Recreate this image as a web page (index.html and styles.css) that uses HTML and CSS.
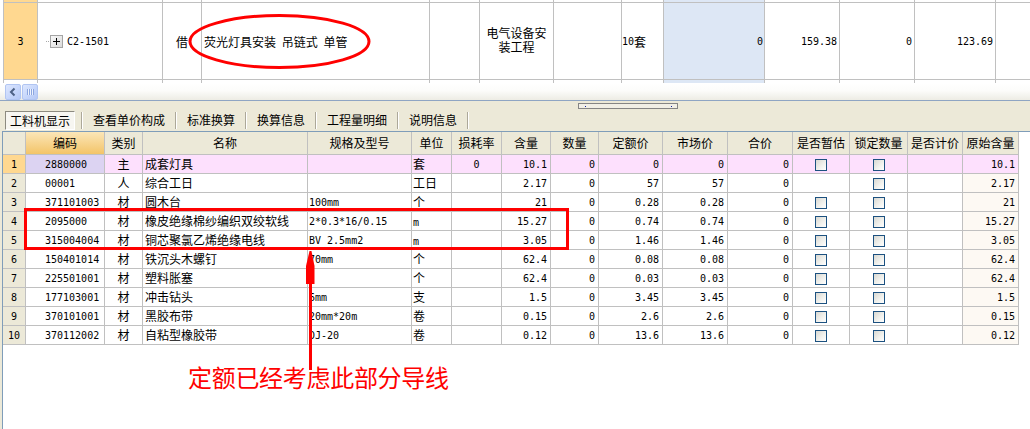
FILE: index.html
```html
<!DOCTYPE html>
<html lang="zh-CN">
<head>
<meta charset="utf-8">
<title>工料机显示</title>
<link rel="stylesheet" href="styles.css">
</head>
<body>
<div class="app">
  <section class="top">
    <div class="topgrid">
      <div class="tg">
        <div class="trn"></div><div></div><div></div><div></div><div></div><div></div><div></div><div></div><div class="sel"></div><div></div><div></div><div></div><div></div>

        <div class="trn mono">3</div>
        <div class="tcode">
          <svg class="exp" width="17" height="13" viewBox="0 0 17 13">
            <defs><linearGradient id="eg" x1="0" y1="0" x2="1" y2="1"><stop offset="0" stop-color="#FAFAFA"/><stop offset="1" stop-color="#D9D9D9"/></linearGradient></defs>
            <path d="M0 6.5H4" stroke="#A8A8A8" stroke-dasharray="1 1"/>
            <rect x="4.5" y="0.5" width="12" height="12" fill="url(#eg)" stroke="#A5A5A5"/>
            <path d="M7 6.5H14M10.5 3V10" stroke="#000"/>
          </svg>
          <span class="mono">C2-1501</span>
        </div>
        <div class="c">借</div>
        <div class="tname">荧光灯具安装 吊链式 单管</div>
        <div></div>
        <div class="dept"><span>电气设备安</span><span>装工程</span></div>
        <div></div>
        <div class="unit"><span class="mono">10</span>套</div>
        <div class="r sel mono">0</div>
        <div class="r mono">159.38</div>
        <div class="r mono">0</div>
        <div class="r mono">123.69</div>
        <div></div>

        <div></div><div></div><div></div><div></div><div></div><div></div><div></div><div></div><div class="sel"></div><div></div><div></div><div></div><div></div>
      </div>
    </div>
    <div class="hscroll">
      <span class="sb">
        <svg width="14" height="14" viewBox="0 0 14 14"><path d="M8.5 3.5L5 7l3.5 3.5" fill="none" stroke="#4D6185" stroke-width="2"/></svg>
      </span>
      <span class="sb">
        <svg width="14" height="14" viewBox="0 0 14 14"><path d="M4.5 4v6M6.5 4v6M8.5 4v6M10.5 4v6" stroke="#8CA6E0"/><path d="M5.5 4v6M7.5 4v6M9.5 4v6" stroke="#EEF3FE"/></svg>
      </span>
    </div>
  </section>

  <div class="splitter"><span class="handle"><i></i><i></i></span></div>

  <nav class="tabs">
    <span class="tab on">工料机显示</span><span class="sep"></span>
    <span class="tab">查看单价构成</span><span class="sep"></span>
    <span class="tab">标准换算</span><span class="sep"></span>
    <span class="tab">换算信息</span><span class="sep"></span>
    <span class="tab">工程量明细</span><span class="sep"></span>
    <span class="tab">说明信息</span><span class="sep"></span>
  </nav>

  <section class="panel">
    <div class="g">
      <div class="hd">
        <div></div><div class="sorted">编码</div><div>类别</div><div>名称</div><div>规格及型号</div><div>单位</div><div>损耗率</div><div>含量</div><div>数量</div><div>定额价</div><div>市场价</div><div>合价</div><div>是否暂估</div><div>锁定数量</div><div>是否计价</div><div>原始含量</div>
      </div>
      <div class="row cur">
        <div>1</div><div>2880000</div><div>主</div><div>成套灯具</div><div></div><div>套</div><div>0</div><div>10.1</div><div>0</div><div>0</div><div>0</div><div>0</div><div><i class="cb"></i></div><div><i class="cb"></i></div><div></div><div>10.1</div>
      </div>
      <div class="row">
        <div>2</div><div>00001</div><div>人</div><div>综合工日</div><div></div><div>工日</div><div></div><div>2.17</div><div>0</div><div>57</div><div>57</div><div>0</div><div></div><div><i class="cb"></i></div><div></div><div>2.17</div>
      </div>
      <div class="row">
        <div>3</div><div>371101003</div><div>材</div><div>圆木台</div><div>100mm</div><div>个</div><div></div><div>21</div><div>0</div><div>0.28</div><div>0.28</div><div>0</div><div><i class="cb"></i></div><div><i class="cb"></i></div><div></div><div>21</div>
      </div>
      <div class="row">
        <div>4</div><div>2095000</div><div>材</div><div>橡皮绝缘棉纱编织双绞软线</div><div>2*0.3*16/0.15</div><div><span class="mono">m</span></div><div></div><div>15.27</div><div>0</div><div>0.74</div><div>0.74</div><div>0</div><div><i class="cb"></i></div><div><i class="cb"></i></div><div></div><div>15.27</div>
      </div>
      <div class="row">
        <div>5</div><div>315004004</div><div>材</div><div>铜芯聚氯乙烯绝缘电线</div><div>BV 2.5mm2</div><div><span class="mono">m</span></div><div></div><div>3.05</div><div>0</div><div>1.46</div><div>1.46</div><div>0</div><div><i class="cb"></i></div><div><i class="cb"></i></div><div></div><div>3.05</div>
      </div>
      <div class="row">
        <div>6</div><div>150401014</div><div>材</div><div>铁沉头木螺钉</div><div>70mm</div><div>个</div><div></div><div>62.4</div><div>0</div><div>0.08</div><div>0.08</div><div>0</div><div><i class="cb"></i></div><div><i class="cb"></i></div><div></div><div>62.4</div>
      </div>
      <div class="row">
        <div>7</div><div>225501001</div><div>材</div><div>塑料胀塞</div><div></div><div>个</div><div></div><div>62.4</div><div>0</div><div>0.03</div><div>0.03</div><div>0</div><div><i class="cb"></i></div><div><i class="cb"></i></div><div></div><div>62.4</div>
      </div>
      <div class="row">
        <div>8</div><div>177103001</div><div>材</div><div>冲击钻头</div><div>6mm</div><div>支</div><div></div><div>1.5</div><div>0</div><div>3.45</div><div>3.45</div><div>0</div><div><i class="cb"></i></div><div><i class="cb"></i></div><div></div><div>1.5</div>
      </div>
      <div class="row">
        <div>9</div><div>370101001</div><div>材</div><div>黑胶布带</div><div>20mm*20m</div><div>卷</div><div></div><div>0.15</div><div>0</div><div>2.6</div><div>2.6</div><div>0</div><div><i class="cb"></i></div><div><i class="cb"></i></div><div></div><div>0.15</div>
      </div>
      <div class="row">
        <div>10</div><div>370112002</div><div>材</div><div>自粘型橡胶带</div><div>DJ-20</div><div>卷</div><div></div><div>0.12</div><div>0</div><div>13.6</div><div>13.6</div><div>0</div><div><i class="cb"></i></div><div><i class="cb"></i></div><div></div><div>0.12</div>
      </div>
    </div>
  </section>

  <svg class="marks" width="1030" height="429" viewBox="0 0 1030 429">
    <ellipse cx="279.5" cy="41.5" rx="89.5" ry="26" fill="none" stroke="#FF0000" stroke-width="3"/>
    <rect x="25.5" y="209.5" width="542" height="39" fill="none" stroke="#FF0000" stroke-width="3"/>
    <path d="M310.5 280V370" stroke="#FF0000" stroke-width="3"/>
    <path d="M309.5 251H311.5L314.5 266V284H306V266Z" fill="#FF0000"/>
  </svg>
  <p class="note">定额已经考虑此部分导线</p>
</div>
</body>
</html>
```

FILE: styles.css
```css
* { box-sizing: border-box; margin: 0; padding: 0; }

html, body { width: 1030px; height: 429px; overflow: hidden; }

body {
  background: #ECE9D8;
  font-family: "Noto Sans CJK SC", "Noto Sans CJK JP", sans-serif;
  font-size: 12px;
  color: #000;
}

.app {
  position: relative;
  width: 1030px;
  height: 429px;
  display: flex;
  flex-direction: column;
}

.mono {
  font-family: "DejaVu Sans Mono", "Liberation Mono", monospace;
  font-size: 10px;
}

/* ---------- top grid ---------- */
.top {
  flex: none;
  background: #fff;
  border-bottom: 1px solid #8FA5C3;
}

.topgrid {
  height: 83px;
  overflow: hidden;
  padding-left: 3px;
}

.tg {
  display: grid;
  width: max-content;
  grid-template-columns: 33px 124px 38px 227px 49px 73px 67px 41px 100px 74px 74px 80px 60px;
  grid-template-rows: 2px 76px 3px;
  gap: 1px;
  padding-left: 1px;
  background: #C0C0C0;
}

.tg > div {
  background: #fff;
  display: flex;
  align-items: center;
  overflow: hidden;
  white-space: nowrap;
}

.tg > .trn { background: #FFD890; justify-content: center; }
.tg > .sel { background: #DDE7F5; }
.tg > .c { justify-content: center; }
.tg > .r { justify-content: flex-end; padding-right: 2px; }
.tg > .sel.r { padding-right: 1px; }

.tcode { padding-left: 8px; gap: 4px; }
.exp { display: block; flex: none; }

.tname { padding-left: 2px; word-spacing: 3px; }

.tg > .dept {
  flex-direction: column;
  justify-content: center;
  align-items: center;
}

.dept span {
  display: block;
  height: 14px;
  line-height: 14px;
  font-family: "Liberation Serif", "Noto Sans CJK SC", sans-serif;
}

.unit { padding-left: 0; }

/* scrollbar */
.hscroll {
  height: 17px;
  display: flex;
  gap: 1px;
  padding: 1px 0 0 5px;
  background: linear-gradient(#FFFFFF 0%, #FCFCFA 45%, #EDECE4 100%);
}

.sb {
  width: 16px;
  height: 16px;
  border: 1px solid #B1C5F2;
  border-radius: 2px;
  background: linear-gradient(135deg, #DDE7FE 0%, #C6D6FB 55%, #B5C8F5 100%);
  display: flex;
  align-items: center;
  justify-content: center;
}

/* splitter */
.splitter {
  flex: none;
  height: 9px;
  padding: 2px 0 0 578px;
}

.handle {
  width: 100px;
  height: 6px;
  border: 1px solid #858585;
  background: #F1EFE6;
  display: flex;
  align-items: center;
  justify-content: space-between;
  padding: 0 5px 0 6px;
}

.handle i {
  width: 1px;
  height: 1px;
  background: #1020A0;
}

/* tabs */
.tabs {
  flex: none;
  height: 20px;
  margin-bottom: 1px;
  padding-left: 5px;
  display: flex;
  align-items: stretch;
}

.tab {
  display: flex;
  align-items: center;
  padding: 0 10px;
  line-height: 16px;
  white-space: nowrap;
}

.tab.on {
  width: 70px;
  padding: 0;
  justify-content: center;
  margin: 1px 6px 0 0;
  border: 1px solid;
  border-color: #8C8A80 #FFFFFF #FFFFFF #8C8A80;
  background: #F7F6F1;
}

.sep {
  width: 2px;
  margin: 2px 0 1px;
  border-left: 1px solid #ACA899;
  border-right: 1px solid #FFFFFF;
}

/* ---------- lower panel / grid ---------- */
.panel {
  flex: 1;
  margin-left: 2px;
  background: #fff;
  border-top: 1px solid #7F9DB9;
  border-left: 1px solid #7F9DB9;
}

.g {
  display: grid;
  width: max-content;
  grid-template-columns: 22px 78px 37px 164px 103px 39px 49px 48px 47px 63px 64px 64px 56px 57px 54px 55px;
  grid-template-rows: 22px;
  grid-auto-rows: 18px;
  gap: 1px;
  padding: 0 1px 1px 0;
  background: #C0C0C0;
}

.row, .hd { display: contents; }

.hd > div {
  background: #ECE9D8;
  text-align: center;
  line-height: 22px;
  white-space: nowrap;
  overflow: hidden;
}

.hd > .sorted {
  background: linear-gradient(#FBE6B8, #F3C468);
}

.row > div {
  background: #fff;
  line-height: 18px;
  white-space: nowrap;
  overflow: hidden;
}

/* column formats */
.row > div:nth-child(1) {
  background: #ECE9D8;
  text-align: center;
  font-family: "DejaVu Sans Mono", monospace;
  font-size: 10px;
  padding-top: 1px;
}
.row > div:nth-child(2) {
  font-family: "DejaVu Sans Mono", monospace;
  font-size: 10px;
  padding: 1px 0 0 19px;
}
.row > div:nth-child(3) { text-align: center; }
.row > div:nth-child(4) { padding-left: 2px; }
.row > div:nth-child(5) {
  font-family: "DejaVu Sans Mono", monospace;
  font-size: 10px;
  padding: 1px 0 0 1px;
}
.row > div:nth-child(6) { padding-left: 1px; }
.row > div:nth-child(7) {
  text-align: center;
  font-family: "DejaVu Sans Mono", monospace;
  font-size: 10px;
  padding-top: 1px;
}
.row > div:nth-child(n+8):nth-child(-n+12),
.row > div:nth-child(16) {
  text-align: right;
  font-family: "DejaVu Sans Mono", monospace;
  font-size: 10px;
  padding: 1px 3px 0 0;
}
.row > div:nth-child(16) { background: #FDF9F3; }

.row > div:nth-child(13),
.row > div:nth-child(14) {
  display: flex;
  align-items: center;
  justify-content: center;
  padding-top: 2px;
}

.row > div .mono { font-size: 10px; }

/* current row */
.row.cur > div { background: #FDE0FD; }
.row.cur > div:nth-child(1) { background: #FFD890; }
.row.cur > div:nth-child(2) { background: #DCD3F2; }

.cb {
  display: block;
  width: 12px;
  height: 12px;
  border: 1px solid #1C5180;
  background: linear-gradient(135deg, #D8D8D2 0%, #F2F2EE 60%, #FFFFFF 100%);
}

/* ---------- annotations ---------- */
.marks {
  position: absolute;
  left: 0;
  top: 0;
  pointer-events: none;
}

.note {
  position: absolute;
  left: 188px;
  top: 365px;
  font-size: 24px;
  line-height: 24px;
  color: #FF0000;
  letter-spacing: -0.3px;
  white-space: nowrap;
}
```
